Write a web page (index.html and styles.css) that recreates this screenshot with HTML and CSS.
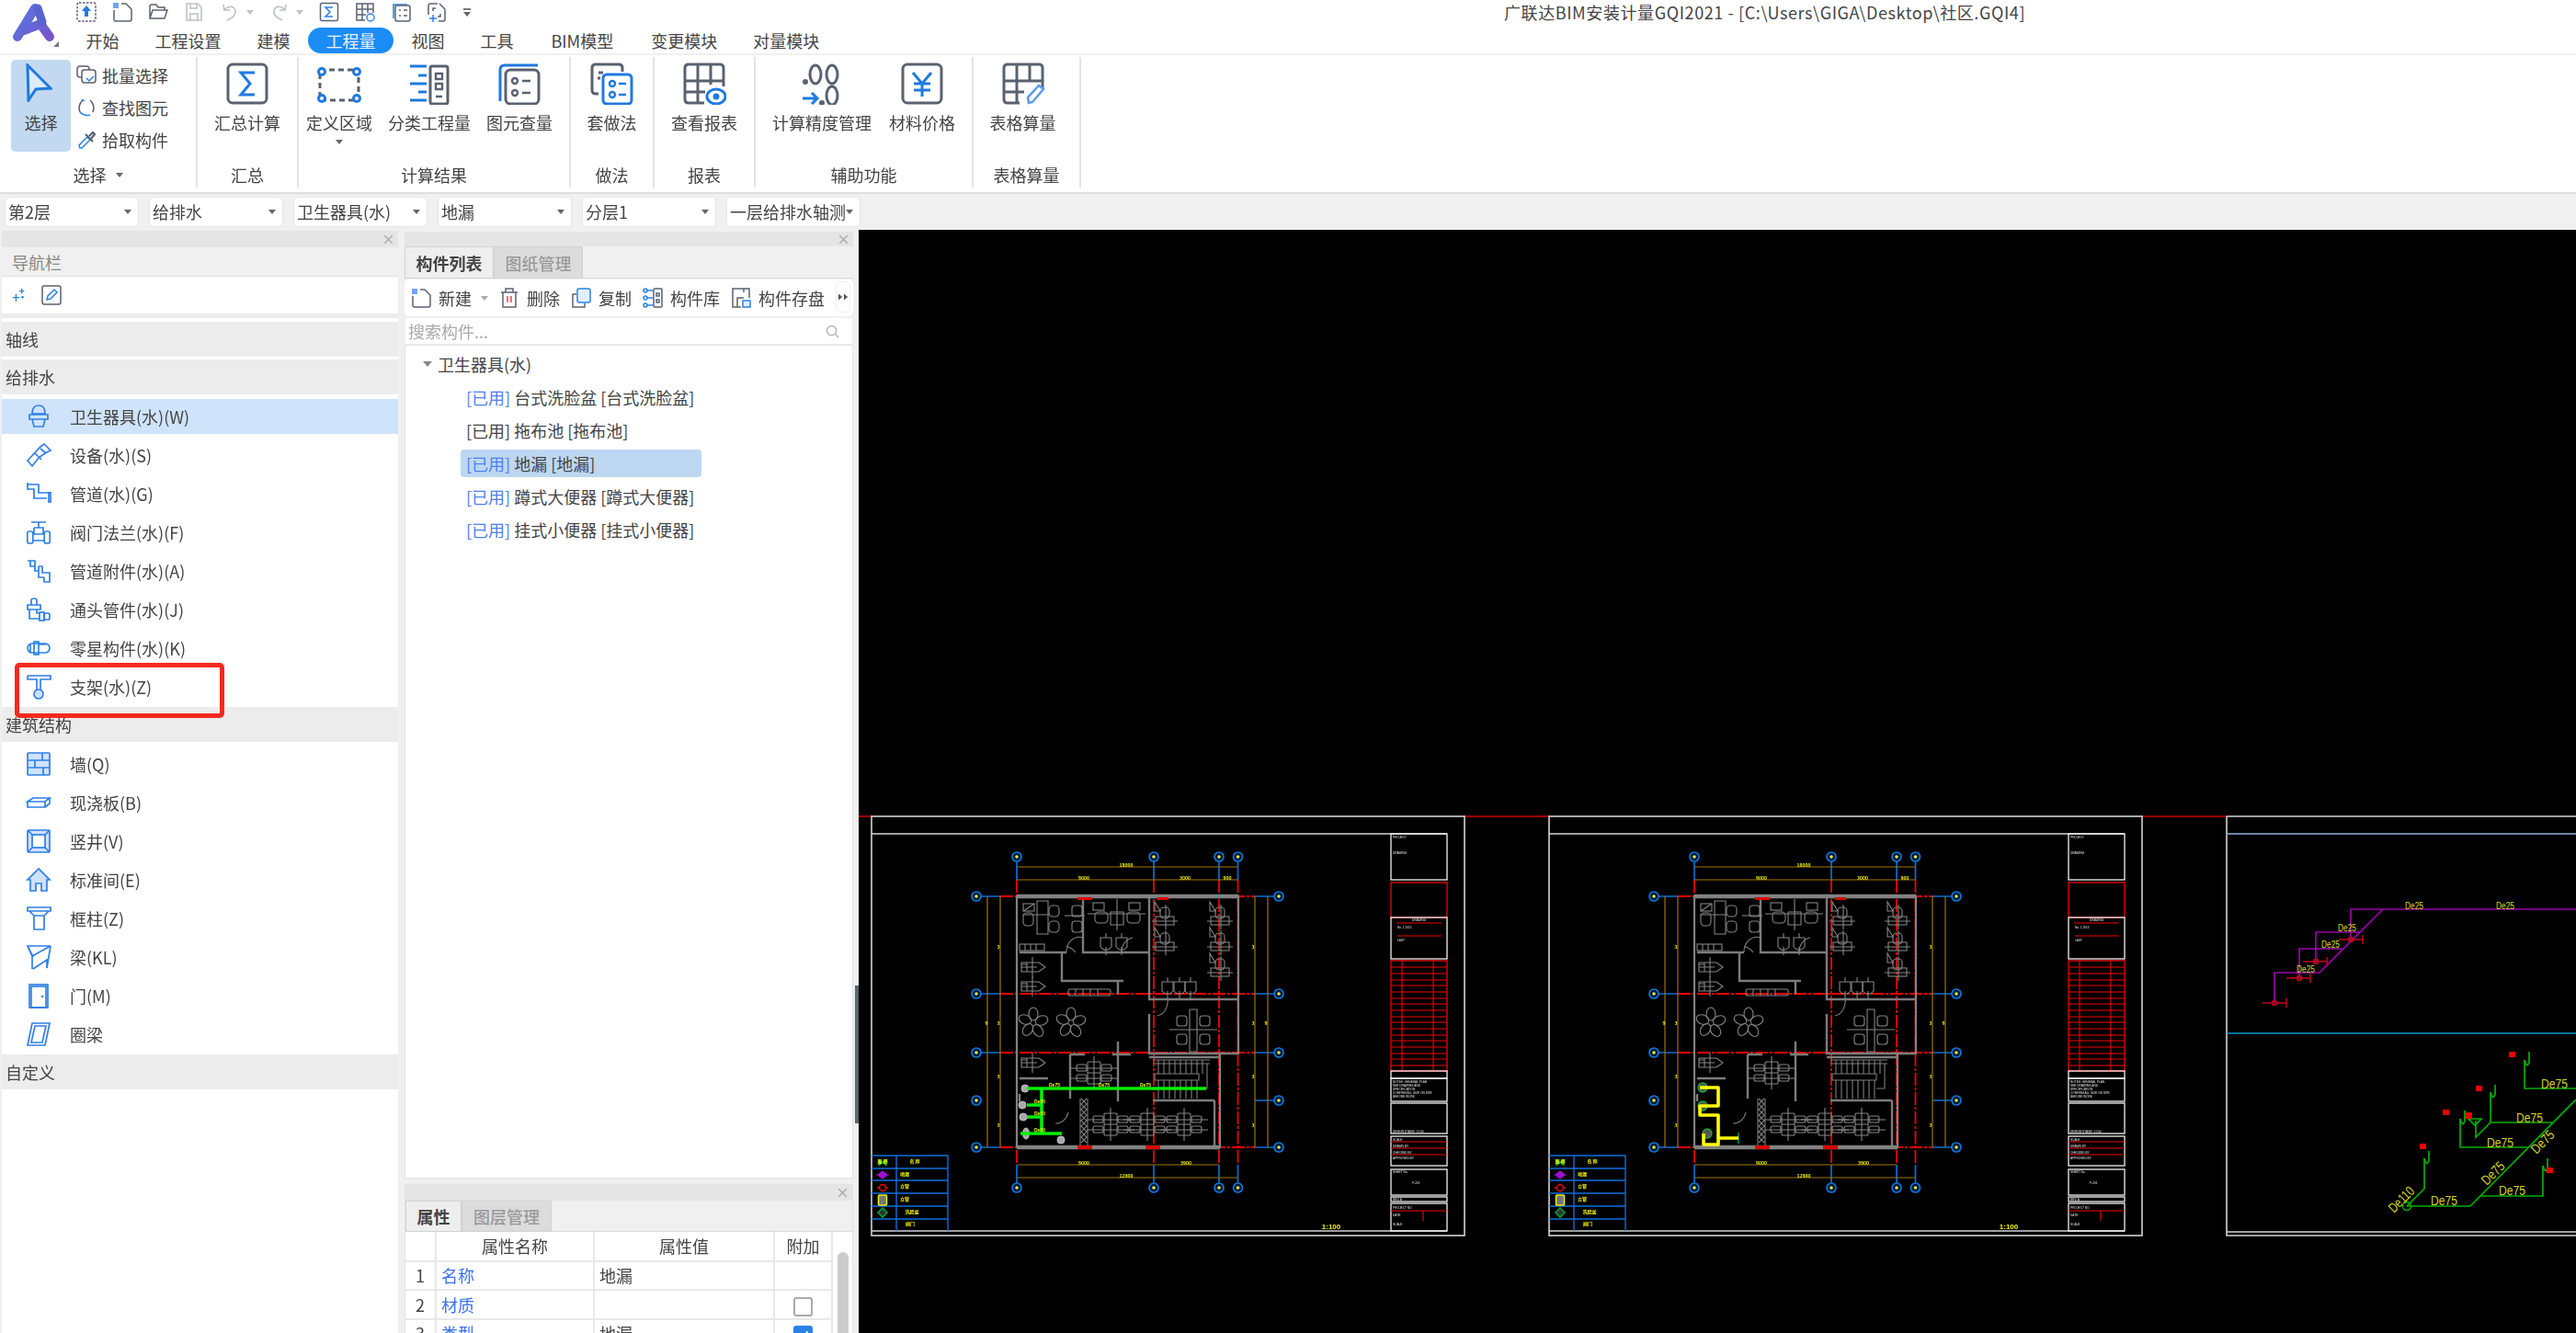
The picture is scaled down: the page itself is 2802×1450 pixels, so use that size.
FILE: index.html
```html
<!DOCTYPE html>
<html lang="zh-CN">
<head>
<meta charset="utf-8">
<title>广联达BIM安装计量GQI2021</title>
<link rel="stylesheet" href="styles.css">
</head>
<body>
<div class="app">
  <header class="head">
    <div class="brand">
      <svg class="logo" viewBox="0 0 74 60">
        <defs><linearGradient id="lg" gradientUnits="userSpaceOnUse" x1="15" y1="5" x2="58" y2="45"><stop offset="0" stop-color="#4f7ce4"/><stop offset="1" stop-color="#7c52c6"/></linearGradient></defs>
        <path d="M38 9 L19 40" class="lg1"/><path d="M26 33 L44 26 L54 40" class="lg1"/><path d="M41 9 L46 24" class="lg2"/>
        <path d="M64 45 V51 H58 Z" class="lgc"/>
      </svg>
    </div>
    <div class="head-main">
      <div class="qat">
        <svg class="qi" viewBox="0 0 22 22"><rect x="1" y="1" width="20" height="20" rx="2" class="dash"/><path d="M11 4 L16 10 H13 V16 H9 V10 H6 Z" class="bf"/></svg>
        <svg class="qi" viewBox="0 0 22 22"><path d="M10 2 H15 L21 8 V19 Q21 21 19 21 H4 Q2 21 2 19 V9" class="dk"/><rect x="1" y="1" width="6" height="6" class="bl"/></svg>
        <svg class="qi" viewBox="0 0 22 22"><path d="M2 18 V5 Q2 3 4 3 H9 L11 6 H18 V9 M2 18 L5 9 H21 L18 18 Z" class="dk"/></svg>
        <svg class="qi off" viewBox="0 0 22 22"><path d="M3 2 H15 L19 6 V20 H3 Z M7 2 V7 H14 V2 M7 20 V13 H15 V20" class="dk"/></svg>
        <svg class="qi off" viewBox="0 0 22 22"><path d="M5 8 Q14 2 17 9 Q18 16 8 20 M4 3 L5 9 L11 9" class="dk"/></svg>
        <span class="caret qc off"></span>
        <svg class="qi off" viewBox="0 0 22 22"><path d="M17 8 Q8 2 5 9 Q4 16 14 20 M18 3 L17 9 L11 9" class="dk"/></svg>
        <span class="caret qc off"></span>
        <svg class="qi" viewBox="0 0 22 22"><rect x="1.500" y="1.500" width="19" height="19" rx="2" class="dk"/><path d="M15 6 H7 L12 11 L7 16 H15" class="bs"/></svg>
        <svg class="qi" viewBox="0 0 22 22"><path d="M15 2 H2 V20 H11 M20 12 V2 H15 M8 2 V20 M14 2 V12 M2 8 H20 M2 14 H12" class="dk"/><circle cx="17" cy="17" r="4" class="bs"/></svg>
        <svg class="qi" viewBox="0 0 22 22"><path d="M3 18 V3 H18" class="bs"/><rect x="5" y="4" width="16" height="17" rx="2" class="dk"/><path d="M9 9 H11 M9 15 H11 M14 9 H18 M14 15 H18" class="dk"/></svg>
        <svg class="qi" viewBox="0 0 22 22"><path d="M12 2 H4 Q2 2 2 4 V14 M14 2 L20 8 V19 Q20 21 18 21 H13 M10 7 H7 V10 M15 13 V16 H12" class="dk"/><path d="M7 14 V22 M3 18 H11" class="bs"/></svg>
        <span class="more"><i></i><span class="caret"></span></span>
        <div class="title">广联达BIM安装计量GQI2021 - [C:\Users\GIGA\Desktop\社区.GQI4]</div>
      </div>
      <nav class="tabs">
        <span class="tab">开始</span><span class="tab">工程设置</span><span class="tab">建模</span><span class="tab on">工程量</span><span class="tab">视图</span><span class="tab">工具</span><span class="tab tab-bim">BIM模型</span><span class="tab">变更模块</span><span class="tab">对量模块</span>
      </nav>
    </div>
  </header>

  <section class="ribbon">
    <div class="group g1">
      <div class="gbody gb-left">
        <div class="pick">
          <svg class="picki" viewBox="0 0 30 42"><path d="M3 2 L28 27 L12 28 L4 40 Z" class="arrow"/></svg>
          <span>选择</span>
        </div>
        <div class="minis">
          <div class="mini"><svg class="qi" viewBox="0 0 22 22"><rect x="1" y="1" width="13" height="12" rx="3" class="dk"/><rect x="6" y="5" width="15" height="14" rx="3" class="whd"/><path d="M11 14 L14 17 L19 12" class="bs"/></svg>批量选择</div>
          <div class="mini"><svg class="qi" viewBox="0 0 22 22"><path d="M7 3 Q1 9 4 16 M15 3 Q21 9 18 16" class="dk"/><path d="M4 16 Q9 21 15 19 M6 2 L9 4" class="bs"/></svg>查找图元</div>
          <div class="mini"><svg class="qi" viewBox="0 0 22 22"><path d="M4 20 L3 17 L12 8 L15 11 L6 20 Z" class="bs"/><path d="M10 5 L18 13 M14 7 L18 3 L20 5 L16 10" class="dkw"/></svg>拾取构件</div>
        </div>
      </div>
      <div class="glabel">选择<span class="caret gc"></span></div>
    </div>

    <div class="group g2">
      <div class="gbody">
        <div class="big"><svg class="bi" viewBox="0 0 48 46"><rect x="3" y="2" width="42" height="42" rx="5" class="idk"/><path d="M32 11 H17 L27 23 L17 35 H32" class="ibl"/></svg><span>汇总计算</span></div>
      </div>
      <div class="glabel">汇总</div>
    </div>

    <div class="group g3">
      <div class="gbody gb-res">
        <div class="big w72">
          <svg class="bi" viewBox="0 0 48 46"><rect x="3" y="8" width="42" height="33" class="idash"/><g class="ibl"><circle cx="5" cy="10" r="3.500"/><circle cx="43" cy="10" r="3.500"/><circle cx="5" cy="39" r="3.500"/><circle cx="43" cy="39" r="3.500"/></g></svg>
          <span>定义区域</span><span class="caret bc"></span>
        </div>
        <div class="big">
          <svg class="bi" viewBox="0 0 48 46"><path d="M3 4 H21 M12 14 H21 M3 23 H21 M12 32 H21 M3 41 H21" class="ibl"/><rect x="25" y="4" width="19" height="41" rx="2" class="idk"/><path d="M31 12 H38 V18 H31 Z M31 23 H38 V29 H31 Z M31 37 H38" class="idk2"/></svg>
          <span>分类工程量</span>
        </div>
        <div class="big w72">
          <svg class="bi" viewBox="0 0 48 46"><path d="M3 42 V8 Q3 3 8 3 H44" class="ibl"/><rect x="9" y="8" width="36" height="37" rx="5" class="idk"/><circle cx="19" cy="20" r="3" class="idk2"/><circle cx="19" cy="33" r="3" class="idk2"/><path d="M27 20 H36 M27 33 H36" class="idk2"/></svg>
          <span>图元查量</span>
        </div>
      </div>
      <div class="glabel">计算结果</div>
    </div>

    <div class="group g4">
      <div class="gbody">
        <div class="big"><svg class="bi" viewBox="0 0 48 46"><path d="M35 10 V6 Q35 2 31 2 H6 Q2 2 2 6 V30 Q2 34 6 34 H9 M9 11 H14 M8 17 H11" class="idk"/><rect x="14" y="13" width="31" height="32" rx="4" class="ibl"/><circle cx="24" cy="23" r="3" class="ibl2"/><circle cx="24" cy="35" r="3" class="ibl2"/><path d="M31 23 H39 M31 35 H39" class="ibl2"/></svg><span>套做法</span></div>
      </div>
      <div class="glabel">做法</div>
    </div>

    <div class="group g5">
      <div class="gbody">
        <div class="big"><svg class="bi" viewBox="0 0 48 46"><path d="M24 44 H7 Q3 44 3 40 V6 Q3 2 7 2 H41 Q45 2 45 6 V26 M3 20 H45 M3 32 H25 M17 2 V44 M31 2 V24" class="idk"/><ellipse cx="37" cy="37" rx="10" ry="8" class="ibl"/><circle cx="37" cy="37" r="3.500" class="ibf"/></svg><span>查看报表</span></div>
      </div>
      <div class="glabel">报表</div>
    </div>

    <div class="group g6">
      <div class="gbody gb-aux">
        <div class="big"><svg class="bi" viewBox="0 0 48 46"><circle cx="6" cy="21" r="3" class="dotf"/><ellipse cx="17" cy="13" rx="6" ry="10" class="idk"/><ellipse cx="35" cy="13" rx="6" ry="10" class="idk"/><path d="M3 39 H19 M13 33 L19 39 L13 45" class="ibl"/><circle cx="24" cy="44" r="3" class="dotf"/><ellipse cx="35" cy="36" rx="6" ry="10" class="idk"/></svg><span>计算精度管理</span></div>
        <div class="big"><svg class="bi" viewBox="0 0 48 46"><rect x="3" y="2" width="42" height="42" rx="5" class="idk"/><path d="M14 11 L24 23 L34 11 M24 23 V37 M15 23 H33 M15 30 H33" class="ibl"/></svg><span>材料价格</span></div>
      </div>
      <div class="glabel">辅助功能</div>
    </div>

    <div class="group g7">
      <div class="gbody gb-last">
        <div class="big"><svg class="bi" viewBox="0 0 48 46"><path d="M20 44 H7 Q3 44 3 40 V6 Q3 2 7 2 H41 Q45 2 45 6 V28 M3 20 H45 M3 32 H25 M17 2 V44 M31 2 V20" class="idk"/><path d="M30 44 L29 38 L41 25 L46 29 L34 43 Z" class="iblt"/></svg><span>表格算量</span></div>
      </div>
      <div class="glabel">表格算量</div>
    </div>
  </section>

  <section class="filters">
    <div class="sel">第2层<span class="caret"></span></div>
    <div class="sel">给排水<span class="caret"></span></div>
    <div class="sel">卫生器具(水)<span class="caret"></span></div>
    <div class="sel">地漏<span class="caret"></span></div>
    <div class="sel">分层1<span class="caret"></span></div>
    <div class="sel">一层给排水轴测<span class="caret"></span></div>
  </section>

  <main class="main">
    <aside class="nav">
      <div class="phead"><svg class="x" viewBox="0 0 10 10"><path d="M0 0 L10 10 M10 0 L0 10"/></svg></div>
      <div class="navtitle">导航栏</div>
      <div class="navacts">
        <svg class="sp" viewBox="0 0 18 18"><path d="M12 1 V7 M9 4 H15 M5 8 V17 M1 12 H9 M13 10 V13 M11.500 11.500 H14.500" class="bs"/></svg>
        <svg class="ed" viewBox="0 0 22 22"><rect x="1" y="1" width="20" height="20" rx="2" class="dk"/><path d="M6 16 L7 12 L14 5 L17 8 L10 15 Z" class="bs"/></svg>
      </div>
      <div class="navsep"></div>
      <div class="navlist">
        <div class="nh">轴线</div>
        <div class="nh">给排水</div>
        <div class="ng">
          <div class="ni sel-row"><svg class="nic" viewBox="0 0 26 26"><path d="M6 10 Q6 1 13 1 Q20 1 20 10 Z M3 11 H23 V16 H3 Z M6 16 L8 24 H18 L20 16"/></svg><span>卫生器具(水)(W)</span></div>
          <div class="ni"><svg class="nic" viewBox="0 0 26 26"><path d="M1 19 L15 4 L19 1 L26 8 L20 11 L13 16 L6 25 Z M9 11 L16 18 M15 6 L21 11"/></svg><span>设备(水)(S)</span></div>
          <div class="ni"><svg class="nic" viewBox="0 0 26 26"><path d="M1 3 H13 V12 H26 M1 8 H8 V18 H22 M1 1 V9 M24 11 V23 M26 11 V23"/></svg><span>管道(水)(G)</span></div>
          <div class="ni"><svg class="nic" viewBox="0 0 26 26"><path d="M5 2 H21 M13 2 V8 M8 8 H18 V15 M8 8 V15 M6 15 H20 M6 22 H20"/><rect x="0.800" y="12" width="6" height="13" rx="2"/><rect x="19.200" y="12" width="6" height="13" rx="2"/></svg><span>阀门法兰(水)(F)</span></div>
          <div class="ni"><svg class="nic" viewBox="0 0 26 26"><path d="M1 2 H9 V13 H13 M4 2 V8 H9 M13 8 V20 H19 M17 8 V15 H25 V25 H19 V20 M13 8 H17"/></svg><span>管道附件(水)(A)</span></div>
          <div class="ni"><svg class="nic" viewBox="0 0 26 26"><path d="M5 8 V3 Q5 1 8 1 Q11 1 11 3 V8 M1 8 H15 V13 H1 Z M3 13 V23 H14 M11 13 V17 H14"/><rect x="14" y="16" width="5" height="9"/><rect x="19" y="17" width="6" height="7" rx="2"/></svg><span>通头管件(水)(J)</span></div>
          <div class="ni"><svg class="nic" viewBox="0 0 26 26"><rect x="1" y="8" width="24" height="10" rx="5"/><rect x="8" y="6" width="5" height="14"/><path d="M4 8 V18 M13 9 H21"/></svg><span>零星构件(水)(K)</span></div>
          <div class="ni"><svg class="nic" viewBox="0 0 26 26"><path d="M1 1 H26 V5 H15 V17 M1 1 V5 H11 V17"/><circle cx="13" cy="21" r="5" class="lf"/></svg><span>支架(水)(Z)</span></div>
        </div>
        <div class="nh">建筑结构</div>
        <div class="ng">
          <div class="ni"><svg class="nic" viewBox="0 0 26 26"><rect x="1" y="1" width="24" height="24" rx="1" class="lf"/><path d="M1 9 H25 M1 17 H25 M17 1 V9 M9 9 V17 M18 17 V25"/></svg><span>墙(Q)</span></div>
          <div class="ni"><svg class="nic" viewBox="0 0 26 26"><path d="M1 12 L7 8 H25 L20 12 Z M1 12 V18 H20 V12 M20 18 L25 14 V8"/></svg><span>现浇板(B)</span></div>
          <div class="ni"><svg class="nic" viewBox="0 0 26 26"><rect x="1" y="1" width="24" height="24" rx="2" class="lf"/><rect x="6" y="6" width="14" height="14" class="wf"/><path d="M1 1 L6 6 M25 1 L20 6 M1 25 L6 20 M25 25 L20 20"/></svg><span>竖井(V)</span></div>
          <div class="ni"><svg class="nic" viewBox="0 0 26 26"><path d="M13 1 L1 13 H4 V25 H10 V17 H16 V25 H22 V13 H25 Z" class="lf"/></svg><span>标准间(E)</span></div>
          <div class="ni"><svg class="nic" viewBox="0 0 26 26"><path d="M1 1 H26 V5 H1 Z M3 5 L8 10 H19 L24 5 M8 10 V25 H19 V10" /></svg><span>框柱(Z)</span></div>
          <div class="ni"><svg class="nic" viewBox="0 0 26 26"><path d="M1 1 H26 L6 12 Z M6 12 V26 M1 1 L7 13 M26 1 L22 25 V16 L7 26"/></svg><span>梁(KL)</span></div>
          <div class="ni"><svg class="nic" viewBox="0 0 26 26"><rect x="3" y="1" width="20" height="25"/><rect x="5" y="3" width="16" height="23"/><circle cx="17" cy="14" r="0.500"/></svg><span>门(M)</span></div>
          <div class="ni"><svg class="nic" viewBox="0 0 26 26"><path d="M6 1 H25 L20 25 H1 Z M9 4 H21 L17 22 H5 Z"/></svg><span>圈梁</span></div>
        </div>
        <div class="nh">自定义</div>
      </div>
      <div class="mark"></div>
    </aside>

    <div class="mid">
      <section class="plist">
        <div class="phead"><svg class="x" viewBox="0 0 10 10"><path d="M0 0 L10 10 M10 0 L0 10"/></svg></div>
        <div class="ptabs"><span class="ptab on">构件列表</span><span class="ptab">图纸管理</span></div>
        <div class="ptools">
          <span class="pt"><svg class="qi" viewBox="0 0 22 22"><path d="M10 2 H15 L21 8 V19 Q21 21 19 21 H4 Q2 21 2 19 V9" class="dk"/><rect x="1" y="1" width="6" height="6" class="bl"/></svg>新建<span class="caret cn"></span></span>
          <span class="pt"><svg class="qi" viewBox="0 0 22 22"><path d="M2 5 H20 M7 5 V1 H15 V5 M4 5 V21 H18 V5" class="dk"/><path d="M9 9 V16 M13 9 V16" class="rs"/></svg>删除</span>
          <span class="pt"><svg class="qi" viewBox="0 0 22 22"><path d="M6 7 H2 V21 H15 V17" class="dk"/><rect x="7" y="1" width="14" height="15" rx="2" class="bsf"/></svg>复制</span>
          <span class="pt"><svg class="qi" viewBox="0 0 22 22"><path d="M5 3 H11 M5 11 H11 M5 19 H11" class="bs"/><circle cx="3" cy="3" r="2" class="bs"/><circle cx="3" cy="11" r="2" class="bs"/><circle cx="3" cy="19" r="2" class="bs"/><rect x="12" y="1" width="9" height="20" rx="1" class="dk"/><path d="M15 6 H18 V9 H15 Z M15 13 H18 V16 H15 Z" class="dk"/></svg>构件库</span>
          <span class="pt"><svg class="qi" viewBox="0 0 22 22"><path d="M11 21 H2 V1 H20 V11 M7 21 V11 H14 M14 1 V5" class="dk"/><rect x="13" y="14" width="8" height="7" class="bsf"/></svg>构件存盘</span>
          <span class="ptmore"><svg viewBox="0 0 13 8"><path d="M0 0 L5 4 L0 8 Z M7 0 L12 4 L7 8 Z"/></svg></span>
        </div>
        <div class="psearch"><span>搜索构件...</span><svg class="si" viewBox="0 0 16 16"><circle cx="7" cy="7" r="5.500"/><path d="M11 11 L15 15"/></svg></div>
        <div class="tree">
          <div class="troot"><span class="caret tc"></span>卫生器具(水)</div>
          <div class="tleaf"><b>[已用]</b> 台式洗脸盆 [台式洗脸盆]</div>
          <div class="tleaf">[已用] 拖布池 [拖布池]</div>
          <div class="tleaf cur"><b>[已用]</b> 地漏 [地漏]</div>
          <div class="tleaf"><b>[已用]</b> 蹲式大便器 [蹲式大便器]</div>
          <div class="tleaf"><b>[已用]</b> 挂式小便器 [挂式小便器]</div>
        </div>
      </section>
      <section class="pprops">
        <div class="phead"><svg class="x" viewBox="0 0 10 10"><path d="M0 0 L10 10 M10 0 L0 10"/></svg></div>
        <div class="ptabs"><span class="ptab on pw1">属性</span><span class="ptab pw2">图层管理</span></div>
        <div class="tblwrap">
          <table class="tbl">
            <colgroup><col class="c0"><col class="c1"><col class="c2"><col class="c3"></colgroup>
            <thead><tr><th></th><th>属性名称</th><th>属性值</th><th>附加</th></tr></thead>
            <tbody>
              <tr><td class="n">1</td><td class="k">名称</td><td>地漏</td><td></td></tr>
              <tr><td class="n">2</td><td class="k">材质</td><td></td><td class="ck"><span class="box"></span></td></tr>
              <tr><td class="n">3</td><td class="k">类型</td><td>地漏</td><td class="ck"><span class="box chk"><svg viewBox="0 0 20 20"><path d="M4 10 L8 15 L16 5"/></svg></span></td></tr>
            </tbody>
          </table>
          <div class="thumb"></div>
        </div>
      </section>
    </div>

    <div class="canvas">
      <svg class="cad" viewBox="934 250 1868 1200">
        <defs>
          <g id="bub"><circle r="5" class="cb"/><circle r="1.800" class="cy"/></g>
          <g id="dine" class="f"><rect x="-7" y="-12" width="14" height="24" rx="1"/><path d="M0 -12 V12 M-7 0 H7 M-26 -5 H26 M-26 6 H26 M0 -18 V18"/><rect x="-19" y="-9" width="11" height="7" rx="2"/><rect x="8" y="-9" width="11" height="7" rx="2"/><rect x="-19" y="2" width="11" height="7" rx="2"/><rect x="8" y="2" width="11" height="7" rx="2"/></g>
          <g id="office" class="f"><rect x="-18" y="-15" width="11" height="11" rx="3"/><rect x="7" y="-15" width="11" height="11" rx="3"/><rect x="-18" y="5" width="11" height="11" rx="3"/><rect x="7" y="5" width="11" height="11" rx="3"/><path d="M-26 0 H26 M-4 -22 H4 V24 H-4 Z"/></g>
          <g id="wc" class="f"><rect x="-10" y="-2" width="20" height="9"/><rect x="-5" y="-12" width="10" height="12" rx="4"/><path d="M-14 3 H14 M1 -15 V12"/><path d="M-11 -18 L-5 -8 H-11 Z"/></g>
          <g id="uri" class="f"><path d="M-6 -7 H6 V3 Q0 10 -6 3 Z M0 3 V12 M0 -12 V-7"/></g>
          <g id="bed" class="f"><path d="M-11 -5 H8 L15 0 L8 5 H-11 Z M-11 0 H6 M-5 -5 V5 M1 -11 V11 M-11 -3 H-5"/></g>
          <g id="fan" class="f"><ellipse cx="0" cy="-9" rx="5" ry="7"/><ellipse cx="9" cy="-2" rx="5" ry="7" transform="rotate(70 9 -2)"/><ellipse cx="5" cy="9" rx="5" ry="7" transform="rotate(-35 5 9)"/><ellipse cx="-6" cy="8" rx="5" ry="7" transform="rotate(35 -6 8)"/><ellipse cx="-9" cy="-3" rx="5" ry="7" transform="rotate(-70 -9 -3)"/></g>
          <g id="sheet">
            <rect x="948" y="888" width="645" height="456" class="sw"/>
            <path d="M948 907 H1574 M948 1339 H1574" class="sw"/>
            <path d="M1106 957 V1267 M1255 957 V1267 M1326 957 V1267 M1346.500 957 V1267 M1088 975 H1365 M1088 1081 H1365 M1088 1145 H1365 M1088 1248 H1365" class="rd"/>
            <path d="M1106 932 V957 M1255 932 V957 M1326 932 V957 M1346.500 932 V957 M1106 1267 V1292 M1255 1267 V1292 M1326 1267 V1292 M1346.500 1267 V1292 M1062 975 H1088 M1062 1081 H1088 M1062 1145 H1088 M1062 1197 H1064 M1062 1248 H1088 M1365 975 H1391 M1365 1081 H1391 M1365 1145 H1391 M1365 1197 H1391 M1365 1248 H1391" class="bl1"/>
            <path d="M1106 943 H1346 M1106 957 H1346 M1074 975 V1248 M1088 975 V1248 M1365 975 V1248 M1379 975 V1248 M1106 1267 H1326 M1106 1281 H1346" class="dm"/>
            <use href="#bub" x="1106" y="932"/><use href="#bub" x="1255" y="932"/><use href="#bub" x="1326" y="932"/><use href="#bub" x="1346.500" y="932"/>
            <use href="#bub" x="1106" y="1292"/><use href="#bub" x="1255" y="1292"/><use href="#bub" x="1326" y="1292"/><use href="#bub" x="1346.500" y="1292"/>
            <use href="#bub" x="1062" y="975"/><use href="#bub" x="1062" y="1081"/><use href="#bub" x="1062" y="1145"/><use href="#bub" x="1062" y="1197"/><use href="#bub" x="1062" y="1248"/>
            <use href="#bub" x="1391" y="975"/><use href="#bub" x="1391" y="1081"/><use href="#bub" x="1391" y="1145"/><use href="#bub" x="1391" y="1197"/><use href="#bub" x="1391" y="1248"/>
            <text x="1225" y="943" class="t">18000</text><text x="1179" y="957" class="t">9000</text><text x="1289" y="957" class="t">3000</text><text x="1335" y="957" class="t">900</text>
            <text x="1179" y="1267" class="t">9000</text><text x="1290" y="1267" class="t">3900</text><text x="1225" y="1281" class="t">12900</text>
            <text x="1086" y="1032" class="t">3</text><text x="1086" y="1115" class="t">3</text><text x="1086" y="1173" class="t">3</text><text x="1086" y="1226" class="t">3</text><text x="1073" y="1115" class="t">9</text>
            <text x="1363" y="1032" class="t">3</text><text x="1363" y="1115" class="t">3</text><text x="1363" y="1173" class="t">3</text><text x="1363" y="1226" class="t">3</text><text x="1377" y="1115" class="t">9</text>
            <path d="M1106 975 H1347 V1146 H1327 V1248 H1106 Z" class="wl"/>
            <path d="M1106 975 H1347 M1106 1248 H1327" class="wt"/>
            <path d="M1250 977 V1087 H1346 M1250 1103 V1146 H1346 M1109 1036 H1160 M1155 1036 V1067 H1222 M1216 1067 V1081 M1178 977 V1036 H1249 M1164 1147 V1195 M1164 1147 H1180 M1210 1147 H1230 M1216 1133 V1198 M1254 1197 H1321 M1250 1150 H1327 M1321 1197 V1246 M1109 1173 H1140 M1109 1190 V1198" class="wi"/>
            <path d="M1176 1195 L1182 1201 L1176 1207 L1182 1213 L1176 1219 L1182 1225 L1176 1231 L1182 1237 L1176 1243 M1182 1195 L1176 1201 L1182 1207 L1176 1213 L1182 1219 L1176 1225 L1182 1231 L1176 1237 L1182 1243 M1175 1195 V1247 M1183 1195 V1247" class="fl"/>
            <path d="M1170 1036 A14 16 0 0 0 1160 1030 M1178 1020 A14 16 0 0 0 1160 1036 M1232 1020 A14 16 0 0 0 1220 1036 M1259 1105 A14 16 0 0 0 1270 1087 M1162 1210 A14 16 0 0 1 1148 1222" class="fl"/>
            <path d="M1254 1153 H1316 M1254 1157 H1316 M1260 1153 V1168 M1266 1153 V1168 M1272 1153 V1168 M1278 1153 V1168 M1284 1153 V1168 M1290 1153 V1168 M1296 1153 V1168 M1302 1153 V1168 M1308 1153 V1168 M1256 1168 H1304 V1175 H1256 Z M1260 1175 V1195 M1266 1175 V1195 M1272 1175 V1195 M1278 1175 V1195 M1284 1175 V1195 M1290 1175 V1195 M1296 1175 V1195 M1302 1175 V1195 M1313 1157 V1184 H1304" class="fl"/>
            <rect x="1172" y="976" width="16" height="3" class="rf"/><rect x="1259" y="976" width="12" height="3" class="rf"/><rect x="1172" y="1246" width="16" height="4" class="rf"/><rect x="1246" y="1246" width="16" height="4" class="rf"/>
            <use href="#wc" x="1267" y="999"/><use href="#wc" x="1267" y="1027"/><use href="#wc" x="1327" y="999"/><use href="#wc" x="1327" y="1027"/><use href="#wc" x="1327" y="1055"/>
            <use href="#uri" x="1203" y="1027"/><use href="#uri" x="1220" y="1027"/><use href="#uri" x="1270" y="1075"/><use href="#uri" x="1283" y="1075"/><use href="#uri" x="1295" y="1075"/>
            <use href="#bed" x="1122" y="1052"/><use href="#bed" x="1122" y="1073"/><use href="#bed" x="1122" y="1156"/>
            <use href="#fan" x="1124" y="1112"/><use href="#fan" x="1165" y="1112"/>
            <use href="#dine" x="1190" y="1167"/><use href="#dine" x="1208" y="1223"/><use href="#dine" x="1248" y="1223"/><use href="#dine" x="1288" y="1223"/>
            <use href="#office" x="1298" y="1120"/>
            <g class="f"><rect x="1113" y="983" width="12" height="8"/><path d="M1113 991 L1125 983 M1140 980 V1016 H1128 V980 Z M1112 995 H1142"/><rect x="1113" y="993" width="11" height="14" rx="4"/><rect x="1141" y="985" width="11" height="12" rx="4"/><rect x="1141" y="1002" width="11" height="12" rx="4"/><rect x="1166" y="985" width="11" height="12" rx="3"/><rect x="1166" y="1002" width="11" height="12" rx="3"/><path d="M1158 996 H1180"/><rect x="1109" y="1027" width="27" height="7"/><path d="M1115 1027 V1034 M1121 1027 V1034 M1127 1027 V1034"/><rect x="1189" y="982" width="12" height="8"/><rect x="1228" y="982" width="12" height="8"/><rect x="1191" y="992" width="14" height="12" rx="4"/><rect x="1226" y="992" width="14" height="12" rx="4"/><path d="M1183 994 H1246 M1215 978 V1012 M1208 992 H1222 V1006 H1208 Z"/><rect x="1162" y="1076" width="46" height="7" rx="2"/><path d="M1170 1076 V1083 M1178 1076 V1083 M1186 1076 V1083 M1194 1076 V1083"/></g>
            <rect x="1513" y="907" width="61" height="50" class="sw1"/><rect x="1513" y="960" width="61" height="38" class="rb"/><rect x="1513" y="998" width="61" height="45" class="sw1"/>
            <path d="M1519 1004 H1568 M1520 1018 H1568" class="rl"/>
            <rect x="1513" y="1045" width="61" height="120" class="rb"/>
            <path d="M1513 1052 H1574 M1513 1059 H1574 M1513 1066 H1574 M1513 1072 H1574 M1513 1079 H1574 M1513 1086 H1574 M1513 1092 H1574 M1513 1099 H1574 M1513 1106 H1574 M1513 1112 H1574 M1513 1119 H1574 M1513 1126 H1574 M1513 1132 H1574 M1513 1139 H1574 M1513 1146 H1574 M1513 1152 H1574 M1513 1159 H1574 M1525 1045 V1165 M1559 1045 V1165" class="rl"/>
            <rect x="1513" y="1165" width="61" height="8" class="sw1"/><rect x="1513" y="1173" width="61" height="25" class="sw1"/><rect x="1513" y="1200" width="61" height="33" class="sw1"/><rect x="1513" y="1236" width="61" height="32" class="sw1"/><rect x="1513" y="1272" width="61" height="28" class="sw1"/><rect x="1513" y="1302" width="61" height="5" class="sw1"/><rect x="1513" y="1309" width="61" height="30" class="sw1"/>
            <path d="M1513 1242 H1574 M1513 1249 H1574 M1513 1256 H1574 M1513 1317 H1574 M1548 1317 V1328" class="rl"/>
            <text x="1515" y="912" class="mt">PROJECT</text><text x="1515" y="929" class="mt">DRAWING</text><text x="1536" y="1002" class="mt">DRAWING</text><text x="1520" y="1010" class="mt">No. 1 2015</text><text x="1520" y="1024" class="mt">LAST</text>
            <text x="1515" y="1178" class="mt">NOTES: GENERAL PLAN</text><text x="1515" y="1182" class="mt">SEE DRAWING AND</text><text x="1515" y="1186" class="mt">SPECIFICATION</text><text x="1515" y="1190" class="mt">CONFIRM ALL SIZE ON SITE</text><text x="1515" y="1194" class="mt">BEFORE WORK</text>
            <text x="1515" y="1232" class="mt">DESIGN STAGE: 1:100</text><text x="1515" y="1241" class="mt">SCALE</text><text x="1515" y="1248" class="mt">DRAWN BY</text><text x="1515" y="1255" class="mt">CHECKED BY</text><text x="1515" y="1261" class="mt">APPROVED BY</text><text x="1515" y="1276" class="mt">SHEET No.</text><text x="1536" y="1288" class="mt">P-201</text><text x="1515" y="1306" class="mt">REV. A</text><text x="1515" y="1315" class="mt">PROJECT NO.</text><text x="1515" y="1323" class="mt">DATE</text><text x="1515" y="1333" class="mt">SCALE</text>
            <path d="M948 1257 H1031 V1339 M948 1271 H1031 M948 1284 H1031 M948 1298 H1031 M948 1312 H1031 M948 1326 H1031 M975 1257 V1339" class="lg"/>
            <path d="M956 1261 V1268 L964 1261 V1268 Z" class="lgn"/>
            <path d="M960 1274 L965 1278 L960 1282 L955 1278 Z M953 1278 H967" class="lpu"/>
            <circle cx="960" cy="1292" r="3.500" class="lre"/><path d="M954 1292 H957 M963 1292 H966" class="lre"/>
            <rect x="955.500" y="1300" width="9" height="11" rx="1" class="lye"/>
            <path d="M960 1314 L965 1319 L960 1324 L955 1319 Z" class="ldg"/>
            <text x="960" y="1265" class="t">图 例</text><text x="995" y="1265" class="t">名 称</text><text x="984" y="1279" class="t">地漏</text><text x="984" y="1292" class="t">立管</text><text x="984" y="1306" class="t">立管</text><text x="992" y="1320" class="t">洗脸盆</text><text x="990" y="1333" class="t">阀门</text>
            <text x="1448" y="1337" class="tb">1:100</text>
          </g>
        </defs>
        <path d="M934 888 H948 M1593 888 H1685 M2330 888 H2422" class="topred"/>
        <g class="soft">
          <use href="#sheet"/>
          <use href="#sheet" x="737"/>
          <g class="fx"><circle cx="1115" cy="1184" r="4"/><circle cx="1112" cy="1202" r="4"/><circle cx="1113" cy="1215" r="4"/><ellipse cx="1116" cy="1233" rx="3.500" ry="6"/><circle cx="1154" cy="1240" r="4"/></g>
          <path d="M1117 1184 H1312 M1133 1184 V1233 M1117 1202 H1133 M1117 1215 H1133 M1110 1233 H1155" class="gp"/>
          <g class="tiny"><text x="1141" y="1182">De75</text><text x="1195" y="1182">De75</text><text x="1240" y="1182">De75</text><text x="1125" y="1200">De50</text><text x="1125" y="1213">De50</text><text x="1125" y="1231">De50</text></g>
          <g class="fx2"><circle cx="1852" cy="1183" r="5"/><circle cx="1852" cy="1203" r="5"/><circle cx="1857" cy="1233" r="5"/><path d="M1891 1232 V1244"/></g>
          <path d="M1849 1183 H1869 V1203 H1849 V1213 H1869 V1245 H1853 V1233 M1869 1238 H1891" class="yp"/>
        </g>

        <path d="M2422 888 H2802 M2422 888 V1344 H2802 M2422 1340 H2802" class="sw"/>
        <path d="M2422 907 H2802" class="lb"/>
        <path d="M2422 1124 H2802" class="cy2"/>
        <path d="M2557 1022 V989 H2802 M2592 989 L2523 1058 H2474 V1091 M2519 1046 V1014 H2567 M2501 1064 V1032 H2549" class="pu"/>
        <g class="rm">
          <path d="M2544 1022 H2570 M2570 1017 V1027 M2505 1046 H2531 M2531 1041 V1051 M2487 1064 H2513 M2513 1059 V1069 M2461 1091 H2487 M2487 1086 V1096"/>
          <circle cx="2557" cy="1022" r="2.500"/><circle cx="2519" cy="1046" r="2.500"/><circle cx="2501" cy="1064" r="2.500"/><circle cx="2474" cy="1091" r="2.500"/>
        </g>
        <g class="tl">
          <text x="2616" y="989" textLength="20" lengthAdjust="spacingAndGlyphs">De25</text>
          <text x="2715" y="989" textLength="20" lengthAdjust="spacingAndGlyphs">De25</text>
          <text x="2543" y="1013" textLength="20" lengthAdjust="spacingAndGlyphs">De25</text>
          <text x="2525" y="1031" textLength="20" lengthAdjust="spacingAndGlyphs">De25</text>
          <text x="2498" y="1058" textLength="20" lengthAdjust="spacingAndGlyphs">De25</text>
        </g>
        <path d="M2618 1312 H2687 L2802 1196 M2618 1312 L2637 1293 V1260 M2698 1301 H2766 V1268 M2749 1248 H2676 V1217 M2777 1221 H2709 L2693 1237 V1219 M2709 1221 V1188 M2802 1184 H2746 V1153" class="gn"/>
        <path d="M2637 1260 Q2640 1270 2642 1262 V1252 M2766 1268 Q2769 1278 2771 1270 V1260 M2676 1217 Q2679 1227 2681 1219 V1208 M2709 1188 Q2712 1198 2714 1190 V1180 M2746 1153 Q2749 1163 2751 1155 V1144" class="gn"/>
        <path d="M2685 1217 H2699 L2692 1224 Z" class="gn"/>
        <circle cx="2618" cy="1312" r="4.500" class="gc"/>
        <g class="rsq"><rect x="2729" y="1144" width="7" height="6"/><rect x="2693" y="1181" width="7" height="6"/><rect x="2657" y="1207" width="7" height="6"/><rect x="2682" y="1210" width="7" height="7"/><rect x="2632" y="1244" width="7" height="6"/><rect x="2770" y="1270" width="7" height="6"/></g>
        <g class="tl2">
          <text x="2644" y="1311" textLength="29" lengthAdjust="spacingAndGlyphs">De75</text>
          <text x="2764" y="1184" textLength="29" lengthAdjust="spacingAndGlyphs">De75</text>
          <text x="2737" y="1221" textLength="29" lengthAdjust="spacingAndGlyphs">De75</text>
          <text x="2705" y="1248" textLength="29" lengthAdjust="spacingAndGlyphs">De75</text>
          <text x="2718" y="1300" textLength="29" lengthAdjust="spacingAndGlyphs">De75</text>
          <text x="0" y="0" textLength="29" lengthAdjust="spacingAndGlyphs" transform="translate(2705 1290) rotate(-45)">De75</text>
          <text x="0" y="0" textLength="29" lengthAdjust="spacingAndGlyphs" transform="translate(2759 1256) rotate(-45)">De75</text>
          <text x="0" y="0" textLength="33" lengthAdjust="spacingAndGlyphs" transform="translate(2604 1320) rotate(-45)">De110</text>
        </g>
      </svg>
    </div>
    <div class="handle"></div>
  </main>
</div>
</body>
</html>
```

FILE: styles.css
```css
* { box-sizing: border-box; }
html, body { margin: 0; padding: 0; }
body { width: 2802px; height: 1450px; overflow: hidden; background: #f0f0f0; }
.app {
  width: 2802px; height: 1450px; display: flex; flex-direction: column;
  font: 18px/24px "Noto Sans CJK SC", "Microsoft YaHei", sans-serif; color: #444;
  filter: blur(.45px);
}

/* header */
.head { height: 60px; display: flex; background: #fff; border-bottom: 2px solid #f0f0f0; }
.brand { width: 74px; flex: none; }
.logo { display: block; width: 74px; height: 60px; fill: none; }
.lg1 { stroke: url(#lg); stroke-width: 10; stroke-linecap: round; stroke-linejoin: round; fill: none; }
.lg2 { stroke: #5a62d0; stroke-width: 9; stroke-linecap: round; fill: none; }
.lgc { fill: #777; }
.head-main { flex: 1; display: flex; flex-direction: column; }
.qat { height: 30px; display: flex; align-items: center; gap: 17px; padding-left: 9px; padding-bottom: 4px; }
.qi { width: 22px; height: 22px; flex: none; fill: none; }
.off { opacity: .4; }
.dk { fill: none; stroke: #5a6270; stroke-width: 1.5; }
.dkw { fill: none; stroke: #5a6270; stroke-width: 2.2; }
.whd { fill: #fff; stroke: #5a6270; stroke-width: 1.5; }
.dash { fill: none; stroke: #5a6270; stroke-width: 1.5; stroke-dasharray: 2.5 1.5; }
.bf { fill: #1f7ae0; }
.bl { fill: #6fa6ef; }
.bs { fill: none; stroke: #2a80e6; stroke-width: 1.5; }
.rs { fill: none; stroke: #e04a4a; stroke-width: 1.5; }
.bsf { fill: #e4f0fd; stroke: #2a80e6; stroke-width: 1.5; }
.caret { display: inline-block; width: 0; height: 0; border-left: 4px solid transparent; border-right: 4px solid transparent; border-top: 5px solid #666; }
.qc { margin-left: -10px; }
.more { display: flex; flex-direction: column; align-items: center; gap: 2px; width: 10px; }
.more i { display: block; width: 8px; height: 2px; background: #777; }
.title { margin-left: 1106px; color: #444; white-space: nowrap; letter-spacing: .6px; }
.tabs { height: 28px; display: flex; align-items: center; }
.tab { padding: 0 19.5px; height: 28px; line-height: 28px; border-radius: 14px; }
.tab-bim { padding: 0 21.5px; }
.tab.on { background: #1b8cf5; color: #e8f3ff; }

/* ribbon */
.ribbon { height: 151px; flex: none; display: flex; background: #fff; border-bottom: 2px solid #dfdfdf; padding-bottom: 5px; }
.group { display: flex; flex-direction: column; margin-top: 2px; border-right: 2px solid #e3e3e3; flex: none; }
.g1 { width: 215px; } .g2 { width: 110px; } .g3 { width: 296px; } .g4 { width: 91px; } .g5 { width: 110px; } .g6 { width: 237px; } .g7 { width: 117px; }
.gbody { flex: 1; display: flex; justify-content: center; padding-top: 6px; }
.gb-left { justify-content: flex-start; padding: 3px 0 0 12px; gap: 6px; }
.gb-res { justify-content: flex-start; padding-left: 8px; gap: 17px; }
.gb-aux { gap: 19px; }
.gb-last { padding-right: 8px; }
.glabel { height: 28px; line-height: 28px; text-align: center; display: flex; align-items: center; justify-content: center; }
.gc { margin-left: 10px; }
.big { display: flex; flex-direction: column; align-items: center; position: relative; }
.big span:not(.caret) { margin-top: 7px; white-space: nowrap; }
.bc { margin-top: 7px; }
.w72 { width: 72px; }
.bi { width: 48px; height: 46px; flex: none; fill: none; }
.idk { fill: none; stroke: #5a6270; stroke-width: 3; }
.idk2 { fill: none; stroke: #5a6270; stroke-width: 2.4; }
.idash { fill: none; stroke: #5a6270; stroke-width: 3; stroke-dasharray: 6 4; }
.ibl { fill: none; stroke: #1f7ae0; stroke-width: 3; }
.ibl circle { fill: #fff; }
.ibl2 { fill: none; stroke: #1f7ae0; stroke-width: 2.4; }
.ibf { fill: #1f7ae0; }
.iblt { fill: none; stroke: #5a9cf0; stroke-width: 2.5; }
.dotf { fill: #5a6270; }
.pick { width: 65px; height: 100px; background: #c2d9f1; border-radius: 5px; display: flex; flex-direction: column; align-items: center; }
.picki { width: 30px; height: 42px; margin: 4px 6px 0 0; }
.arrow { fill: #dcebfb; stroke: #1f7ae0; stroke-width: 3; }
.pick span { margin-top: 10px; }
.minis { display: flex; flex-direction: column; margin-top: -1px; }
.mini { height: 35px; display: flex; align-items: center; gap: 6px; white-space: nowrap; }

/* filters */
.filters { height: 39px; flex: none; display: flex; gap: 11px; padding: 3px 0 0 5px; }
.sel { width: 146px; height: 33px; background: #fff; border: 1px solid #e6e6e6; border-radius: 5px; padding-left: 3px; line-height: 31px; display: flex; align-items: center; justify-content: space-between; white-space: nowrap; overflow: hidden; }
.sel .caret { margin-right: 7px; flex: none; }

/* main */
.main { flex: 1; display: flex; position: relative; min-height: 0; }
.nav { width: 431px; margin: 1px 7px 0 2px; flex: none; background: #fff; display: flex; flex-direction: column; position: relative; }
.phead { height: 18px; background: #e5e5e5; display: flex; justify-content: flex-end; align-items: center; padding-right: 6px; flex: none; }
.x { width: 9px; height: 9px; fill: none; stroke: #a8a8a8; stroke-width: 1.5; }
.navtitle { height: 32px; line-height: 32px; background: #f0f0f0; padding-left: 11px; color: #888; border-bottom: 1px solid #e2e2e2; }
.navacts { height: 40px; display: flex; align-items: center; gap: 16px; padding-left: 11px; }
.sp { width: 16px; height: 16px; fill: none; }
.ed { width: 22px; height: 22px; fill: none; }
.navsep { height: 5px; background: #ececec; }
.navlist { padding-top: 4px; flex: 1; }
.nh { height: 38px; line-height: 38px; background: #ececec; padding-left: 4px; margin-bottom: 3px; }
.ng { margin-bottom: 1px; display: flex; flex-direction: column; }
.ni { height: 38px; margin: 2px 0; display: flex; align-items: center; gap: 21px; padding-left: 27px; }
.sel-row { background: #cfe4fb; }
.nic { width: 26px; height: 26px; flex: none; fill: none; stroke: #2f7fe6; stroke-width: 1.7; overflow: visible; }
.lf { fill: #cfe2fb; }
.wf { fill: #fff; }
.mark { position: absolute; left: 14px; top: 470px; width: 228px; height: 60px; border: 5px solid #f5291e; border-radius: 5px; }

.mid { width: 488px; flex: none; display: flex; flex-direction: column; gap: 6px; margin-right: 6px; }
.plist { flex: 1; display: flex; flex-direction: column; min-height: 0; padding-top: 2px; }
.plist .phead { height: 16px; }
.pprops { height: 162px; flex: none; display: flex; flex-direction: column; border-left: 1px solid #e3e3e3; border-right: 1px solid #e3e3e3; }
.pprops .ptabs { height: 34px; }
.pprops .ptab { height: 34px; line-height: 33px; }
.ptabs { height: 35px; display: flex; background: #f0f0f0; border-bottom: 1px solid #dcdcdc; flex: none; }
.ptab { width: 97px; height: 35px; line-height: 34px; text-align: center; background: #dcdcdc; color: #999; font-weight: 500; border: 1px solid #d2d2d2; }
.ptab.on { background: #eee; color: #444; font-weight: 700; }
.pw1 { width: 61px; } .pw2 { width: 98px; }
.ptools { height: 40px; margin-top: 1px; background: #fff; border-radius: 5px; display: flex; align-items: center; gap: 12px; padding-left: 7px; position: relative; flex: none; }
.pt { display: flex; align-items: center; gap: 8px; white-space: nowrap; }
.cn { margin-left: 2px; border-top-color: #aaa; }
.ptmore { position: absolute; right: 3px; top: 2px; width: 16px; height: 34px; border-radius: 5px; border: 1px solid #efefef; display: flex; align-items: center; justify-content: center; }
.ptmore svg { width: 11px; height: 8px; fill: #555; }
.psearch { height: 30px; margin-top: 1px; background: #fff; display: flex; align-items: center; justify-content: space-between; padding: 0 14px 0 3px; color: #aaa; flex: none; border: 1px solid #eee; }
.si { width: 15px; height: 15px; fill: none; stroke: #b5b5b5; stroke-width: 1.6; }
.tree { flex: 1; background: #fff; border: 1px solid #e3e3e3; padding-top: 2px; display: flex; flex-direction: column; }
.troot { height: 36px; display: flex; align-items: center; padding-left: 19px; flex: none; }
.tc { margin-right: 6px; border-left-width: 5px; border-right-width: 5px; border-top-width: 6px; border-top-color: #888; }
.tleaf { width: 262px; height: 30px; line-height: 30px; margin: 3px 0 3px 60px; padding-left: 6px; border-radius: 4px; white-space: nowrap; flex: none; }
.tleaf b { font-weight: 400; color: #4c80ee; }
.tleaf.cur { background: #bdd7f2; }

.tblwrap { flex: 1; background: #fff; position: relative; overflow: hidden; }
.tbl { border-collapse: collapse; table-layout: fixed; width: 464px; }
.c0 { width: 33px; } .c1 { width: 172px; } .c2 { width: 196px; } .c3 { width: 63px; }
.tbl th, .tbl td { height: 31.5px; padding: 0; border: 2px solid #e8e8e8; font-weight: 400; white-space: nowrap; }
.tbl th { text-align: center; border-top: 0; }
.tbl th:first-child, .tbl td:first-child { border-left: 0; }
.tbl td { padding-left: 5px; }
.tbl td.n { text-align: center; padding: 0; }
.tbl td.k { color: #3a6ff0; }
.tbl td.ck { text-align: center; padding: 0; }
.box { display: inline-block; width: 21px; height: 21px; border: 2px solid #aaa; border-radius: 3px; vertical-align: middle; background: #fff; }
.box.chk { background: #2a80e6; border-color: #2a80e6; }
.box.chk svg { display: block; fill: none; stroke: #fff; stroke-width: 2.2; }
.thumb { position: absolute; left: 470px; top: 22px; width: 12px; height: 120px; background: #ccc; border-radius: 6px; }

.canvas { flex: 1; background: #000; overflow: hidden; min-width: 0; }
.handle { position: absolute; left: 930px; top: 822px; width: 4px; height: 150px; background: #5e666e; }
.cad { display: block; width: 1868px; height: 1200px; fill: none; }
.soft { filter: blur(.6px); }

/* cad strokes */
.sw { fill: none; stroke: #d4d4d4; stroke-width: 1.6; }
.sw1 { fill: none; stroke: #f2f2f2; stroke-width: 1.3; }
.rd { stroke: #f40000; stroke-width: 1.8; stroke-dasharray: 14 2 3 2; fill: none; }
.bl1 { stroke: #0a6fd6; stroke-width: 1.7; fill: none; }
.dm { stroke: #a07600; stroke-width: 1.2; fill: none; }
.cb { fill: #001a33; stroke: #0a78e0; stroke-width: 1.7; }
.cy { fill: #e8e84a; }
.t { fill: #f2f200; font: 700 5px "Noto Sans CJK SC", "Liberation Sans", sans-serif; text-anchor: middle; }
.tb { fill: #f2f200; font: 700 8px "Liberation Sans", sans-serif; text-anchor: middle; }
.mt { fill: #e8e8e8; font: 3.2px "Liberation Sans", sans-serif; }
.wl { fill: none; stroke: #828282; stroke-width: 2.2; }
.wt { fill: none; stroke: #828282; stroke-width: 4.4; }
.wi { fill: none; stroke: #7c7c7c; stroke-width: 2.4; }
.fl { fill: none; stroke: #7e7e7e; stroke-width: 1.1; }
.f { fill: none; stroke: #858585; stroke-width: 1.1; }
.rf { fill: #e00000; }
.rb { fill: none; stroke: #f00000; stroke-width: 1.3; }
.rl { fill: none; stroke: #f00000; stroke-width: 1.1; }
.lg { fill: none; stroke: #0a70e0; stroke-width: 1.4; }
.lgn { fill: #00c030; stroke: #00c030; stroke-width: 1; }
.lpu { fill: #a010d0; stroke: #a010d0; stroke-width: 1.2; }
.lre { fill: none; stroke: #f00000; stroke-width: 1.4; }
.lye { fill: #777; stroke: #f0f000; stroke-width: 1.5; }
.ldg { fill: #333; stroke: #00a030; stroke-width: 1.6; }
.topred { stroke: #d00000; stroke-width: 1.4; fill: none; }
.gp { fill: none; stroke: #00f000; stroke-width: 3.6; }
.yp { fill: none; stroke: #ffff00; stroke-width: 3.6; stroke-linejoin: round; }
.fx { fill: #a8a8a8; stroke: #c8c0d4; stroke-width: 1; }
.fx2 { fill: #555; stroke: #10b040; stroke-width: 1.3; }
.tiny text { fill: #f2f200; font: 700 5px "Liberation Sans", sans-serif; }
.lb { fill: none; stroke: #8ab6dc; stroke-width: 1.6; }
.cy2 { fill: none; stroke: #0a9ccc; stroke-width: 1.5; }
.pu { fill: none; stroke: #9a00a8; stroke-width: 1.7; }
.rm { fill: none; stroke: #c40020; stroke-width: 1.5; }
.tl text { fill: #dcdc20; font: 10px "Liberation Sans", sans-serif; }
.tl2 text { fill: #d4d420; font: 15px "Liberation Sans", sans-serif; }
.gn { fill: none; stroke: #00b000; stroke-width: 1.7; }
.gc { fill: none; stroke: #00b000; stroke-width: 1.5; }
.rsq { fill: #f00000; }
```
